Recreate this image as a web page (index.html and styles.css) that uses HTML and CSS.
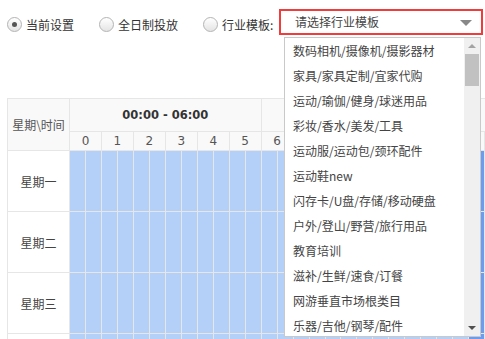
FILE: index.html
```html
<!DOCTYPE html>
<html lang="zh-CN">
<head>
<meta charset="utf-8">
<title>投放时间</title>
<link rel="stylesheet" href="styles.css">
</head>
<body>
<div class="page">
  <div class="toolbar">
    <label class="opt"><span class="radio checked"></span><span class="opt-text">当前设置</span></label>
    <label class="opt"><span class="radio"></span><span class="opt-text">全日制投放</span></label>
    <label class="opt opt-last"><span class="radio"></span><span class="opt-text">行业模板:</span></label>
    <div class="select">
      <div class="select-box"><span class="select-text">请选择行业模板</span><span class="caret"></span></div>
      <div class="dropdown">
        <ul class="options">
          <li>数码相机/摄像机/摄影器材</li>
          <li>家具/家具定制/宜家代购</li>
          <li>运动/瑜伽/健身/球迷用品</li>
          <li>彩妆/香水/美发/工具</li>
          <li>运动服/运动包/颈环配件</li>
          <li>运动鞋new</li>
          <li>闪存卡/U盘/存储/移动硬盘</li>
          <li>户外/登山/野营/旅行用品</li>
          <li>教育培训</li>
          <li>滋补/生鲜/速食/订餐</li>
          <li>网游垂直市场根类目</li>
          <li>乐器/吉他/钢琴/配件</li>
          <li>家装主材</li>
        </ul>
        <div class="sbar"><span class="sb-up"></span><span class="sb-thumb"></span><span class="sb-fill"></span><span class="sb-down"></span></div>
      </div>
    </div>
  </div>

  <table class="schedule">
    <thead>
      <tr class="groups">
        <th class="corner" rowspan="2">星期\时间</th>
        <th colspan="12">00:00 - 06:00</th>
        <th colspan="12">06:00 - 12:00</th>
        <th colspan="12">12:00 - 18:00</th>
        <th colspan="12">18:00 - 24:00</th>
      </tr>
      <tr class="hours">
        <th colspan="2">0</th><th colspan="2">1</th><th colspan="2">2</th><th colspan="2">3</th><th colspan="2">4</th><th colspan="2">5</th>
        <th colspan="2">6</th><th colspan="2">7</th><th colspan="2">8</th><th colspan="2">9</th><th colspan="2">10</th><th colspan="2">11</th>
        <th colspan="2">12</th><th colspan="2">13</th><th colspan="2">14</th><th colspan="2">15</th><th colspan="2">16</th><th colspan="2">17</th>
        <th colspan="2">18</th><th colspan="2">19</th><th colspan="2">20</th><th colspan="2">21</th><th colspan="2">22</th><th colspan="2">23</th>
      </tr>
    </thead>
    <tbody>
      <tr><th class="day">星期一</th><td></td><td></td><td></td><td></td><td></td><td></td><td></td><td></td><td></td><td></td><td></td><td></td><td></td><td></td><td></td><td></td><td></td><td></td><td></td><td></td><td></td><td></td><td></td><td></td><td></td><td class="d"></td><td class="d"></td><td class="d"></td><td class="d"></td><td class="d"></td><td class="d"></td><td class="d"></td><td class="d"></td><td class="d"></td><td class="d"></td><td class="d"></td><td class="d"></td><td class="d"></td><td class="d"></td><td class="d"></td><td class="d"></td><td class="d"></td><td class="d"></td><td class="d"></td><td class="d"></td><td class="d"></td><td class="d"></td><td class="d"></td></tr>
      <tr><th class="day">星期二</th><td></td><td></td><td></td><td></td><td></td><td></td><td></td><td></td><td></td><td></td><td></td><td></td><td></td><td></td><td></td><td></td><td></td><td></td><td></td><td></td><td></td><td></td><td></td><td></td><td></td><td class="d"></td><td class="d"></td><td class="d"></td><td class="d"></td><td class="d"></td><td class="d"></td><td class="d"></td><td class="d"></td><td class="d"></td><td class="d"></td><td class="d"></td><td class="d"></td><td class="d"></td><td class="d"></td><td class="d"></td><td class="d"></td><td class="d"></td><td class="d"></td><td class="d"></td><td class="d"></td><td class="d"></td><td class="d"></td><td class="d"></td></tr>
      <tr><th class="day">星期三</th><td></td><td></td><td></td><td></td><td></td><td></td><td></td><td></td><td></td><td></td><td></td><td></td><td></td><td></td><td></td><td></td><td></td><td></td><td></td><td></td><td></td><td></td><td></td><td></td><td></td><td class="d"></td><td class="d"></td><td class="d"></td><td class="d"></td><td class="d"></td><td class="d"></td><td class="d"></td><td class="d"></td><td class="d"></td><td class="d"></td><td class="d"></td><td class="d"></td><td class="d"></td><td class="d"></td><td class="d"></td><td class="d"></td><td class="d"></td><td class="d"></td><td class="d"></td><td class="d"></td><td class="d"></td><td class="d"></td><td class="d"></td></tr>
      <tr><th class="day">星期四</th><td></td><td></td><td></td><td></td><td></td><td></td><td></td><td></td><td></td><td></td><td></td><td></td><td></td><td></td><td></td><td></td><td></td><td></td><td></td><td></td><td></td><td></td><td></td><td></td><td></td><td class="d"></td><td class="d"></td><td class="d"></td><td class="d"></td><td class="d"></td><td class="d"></td><td class="d"></td><td class="d"></td><td class="d"></td><td class="d"></td><td class="d"></td><td class="d"></td><td class="d"></td><td class="d"></td><td class="d"></td><td class="d"></td><td class="d"></td><td class="d"></td><td class="d"></td><td class="d"></td><td class="d"></td><td class="d"></td><td class="d"></td></tr>
    </tbody>
  </table>
</div>
</body>
</html>
```

FILE: styles.css
```css
* { box-sizing: border-box; }
html, body { margin: 0; padding: 0; background: #fff; }
body {
  font-family: "Noto Sans CJK SC", "Liberation Sans", sans-serif;
  font-size: 12px;
  color: #333;
}
.page {
  width: 485px;
  height: 339px;
  overflow: hidden;
}

/* top option row */
.toolbar {
  display: flex;
  align-items: flex-start;
  height: 26px;
  margin-top: 9px;
  padding-left: 7px;
  padding-right: 2px;
}
.opt {
  flex: none;
  display: flex;
  align-items: center;
  height: 26px;
  padding-top: 5px;
  margin-right: 25px;
  line-height: 16px;
  white-space: nowrap;
  color: #333;
}
.opt.opt-last { margin-right: 4px; }
.radio {
  flex: none;
  width: 15px;
  height: 15px;
  margin-right: 4px;
  border: 1px solid #b4b4b4;
  border-radius: 50%;
  background: linear-gradient(#ffffff, #e4e4e4);
  display: flex;
  align-items: center;
  justify-content: center;
}
.radio.checked::after {
  content: "";
  width: 5px;
  height: 5px;
  border-radius: 50%;
  background: #555;
}

/* select */
.select {
  flex: none;
  position: relative;
  margin-left: auto;
  width: 204px;
}
.select-box {
  height: 26px;
  border: 2px solid #f23b3b;
  background: #fff;
  display: flex;
  align-items: center;
  justify-content: space-between;
  padding: 0 9px 0 14px;
  color: #444;
  white-space: nowrap;
}
.select-text { line-height: 16px; }
.caret {
  width: 0;
  height: 0;
  margin-top: 2px;
  border-left: 6px solid transparent;
  border-right: 6px solid transparent;
  border-top: 6px solid #888;
}
.dropdown {
  position: absolute;
  top: 28px;
  left: 5px;
  width: 197px;
  height: 300px;
  border: 1px solid #c9c9c9;
  background: #fff;
  display: flex;
  overflow: hidden;
  z-index: 2;
}
.options {
  flex: 1;
  margin: 0;
  padding: 0;
  list-style: none;
  overflow: hidden;
}
.options li {
  height: 25px;
  line-height: 25px;
  padding-left: 8px;
  white-space: nowrap;
  color: #444;
}
.sbar {
  width: 16px;
  flex: none;
  background: #f0f0f0;
  display: flex;
  flex-direction: column;
  align-items: center;
}
.sb-up, .sb-down {
  height: 16px;
  width: 16px;
  flex: none;
  display: flex;
  align-items: center;
  justify-content: center;
}
.sb-up::before {
  content: "";
  border-left: 4px solid transparent;
  border-right: 4px solid transparent;
  border-bottom: 4px solid #a3a3a3;
}
.sb-down::before {
  content: "";
  border-left: 4px solid transparent;
  border-right: 4px solid transparent;
  border-top: 4px solid #505050;
}
.sb-thumb {
  width: 14px;
  height: 32px;
  flex: none;
  background: #c1c1c1;
}
.sb-fill { flex: 1; }

/* schedule table */
.schedule {
  margin-top: 63px;
  margin-left: 7px;
  border-collapse: collapse;
  table-layout: fixed;
  width: 830px;
}
.schedule th,
.schedule td {
  border: 1px solid #e6e6e6;
  padding: 0;
}
.schedule thead th {
  background: #f9f9f9;
  font-weight: normal;
}
.schedule .corner {
  width: 62px;
  color: #555;
}
.groups th {
  height: 33px;
  font-family: "DejaVu Sans", sans-serif;
  font-weight: bold !important;
  font-size: 11.5px;
  color: #333;
  white-space: nowrap;
}
.groups th.corner {
  font-family: "Noto Sans CJK SC", sans-serif;
  font-weight: normal !important;
  font-size: 12px;
  color: #555;
}
.hours th {
  height: 19px;
  font-family: "DejaVu Sans", sans-serif;
  font-size: 12px;
  color: #555;
  line-height: 16px;
}
.schedule td {
  width: 16px;
  height: 61px;
  background: #b4cff8;
}
.schedule td.d { background: #6b9cf2; }
.schedule .day {
  background: #fff;
  font-weight: normal;
  color: #444;
}
```
